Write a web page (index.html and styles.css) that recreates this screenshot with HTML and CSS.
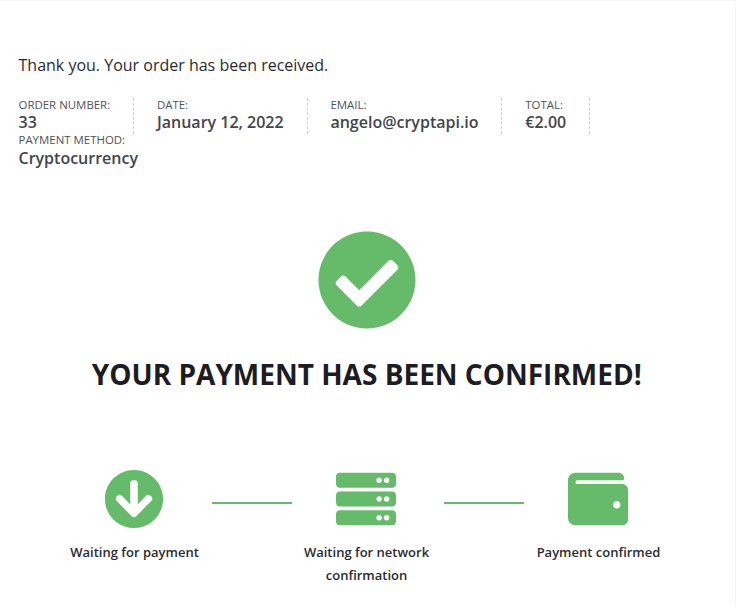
FILE: index.html
```html
<!DOCTYPE html>
<html lang="en">
<head>
<meta charset="utf-8">
<title>Order received</title>
<link rel="stylesheet" href="styles.css">
</head>
<body>
<main class="page">
  <p class="notice">Thank you. Your order has been received.</p>
  <ul class="overview">
    <li>Order number:<strong>33</strong></li>
    <li>Date:<strong>January 12, 2022</strong></li>
    <li>Email:<strong>angelo@cryptapi.io</strong></li>
    <li>Total:<strong>€2.00</strong></li>
    <li class="last">Payment method:<strong>Cryptocurrency</strong></li>
  </ul>
  <svg class="check" viewBox="5.440 5.440 501.100 501.100"><path d="M504 256c0 136.967-111.033 248-248 248S8 392.967 8 256 119.033 8 256 8s248 111.033 248 248zM227.314 387.314l184-184c6.248-6.248 6.248-16.379 0-22.627l-22.627-22.627c-6.248-6.249-16.379-6.249-22.628 0L216 308.118l-70.059-70.059c-6.248-6.248-16.379-6.248-22.628 0l-22.627 22.627c-6.248 6.248-6.248 16.379 0 22.627l104 104c6.249 6.249 16.379 6.249 22.628.001z"/></svg>
  <h1>Your payment has been confirmed!</h1>
  <div class="steps">
    <div class="step">
      <svg class="icon" viewBox="0 0 512 512"><path d="M504 256c0 137-111 248-248 248S8 393 8 256 119 8 256 8s248 111 248 248zm-143.600-28.900L288 302.600V120c0-13.300-10.700-24-24-24h-16c-13.300 0-24 10.700-24 24v182.600l-72.400-75.500c-9.300-9.700-24.800-9.900-34.300-.4l-10.900 11c-9.400 9.400-9.400 24.600 0 33.900L239 404.300c9.400 9.400 24.600 9.400 33.900 0l132.700-132.700c9.400-9.400 9.400-24.600 0-33.900l-10.900-11c-9.500-9.500-25-9.300-34.300.4z"/></svg>
      <p>Waiting for payment</p>
    </div>
    <div class="line"></div>
    <div class="step">
      <svg class="icon" viewBox="0 0 512 512"><path d="M480 160H32c-17.673 0-32-14.327-32-32V64c0-17.673 14.327-32 32-32h448c17.673 0 32 14.327 32 32v64c0 17.673-14.327 32-32 32zm-48-88c-13.255 0-24 10.745-24 24s10.745 24 24 24 24-10.745 24-24-10.745-24-24-24zm-64 0c-13.255 0-24 10.745-24 24s10.745 24 24 24 24-10.745 24-24-10.745-24-24-24zm112 248H32c-17.673 0-32-14.327-32-32v-64c0-17.673 14.327-32 32-32h448c17.673 0 32 14.327 32 32v64c0 17.673-14.327 32-32 32zm-48-88c-13.255 0-24 10.745-24 24s10.745 24 24 24 24-10.745 24-24-10.745-24-24-24zm-64 0c-13.255 0-24 10.745-24 24s10.745 24 24 24 24-10.745 24-24-10.745-24-24-24zm112 248H32c-17.673 0-32-14.327-32-32v-64c0-17.673 14.327-32 32-32h448c17.673 0 32 14.327 32 32v64c0 17.673-14.327 32-32 32zm-48-88c-13.255 0-24 10.745-24 24s10.745 24 24 24 24-10.745 24-24-10.745-24-24-24zm-64 0c-13.255 0-24 10.745-24 24s10.745 24 24 24 24-10.745 24-24-10.745-24-24-24z"/></svg>
      <p>Waiting for network confirmation</p>
    </div>
    <div class="line"></div>
    <div class="step">
      <svg class="icon" viewBox="0 0 512 512"><path d="M461.200 128H80c-8.840 0-16-7.160-16-16s7.160-16 16-16h384c8.840 0 16-7.160 16-16 0-26.510-21.490-48-48-48H64C28.650 32 0 60.650 0 96v320c0 35.350 28.650 64 64 64h397.200c28.020 0 50.800-21.530 50.800-48V176c0-26.470-22.780-48-50.800-48zM416 336c-17.670 0-32-14.330-32-32s14.330-32 32-32 32 14.330 32 32-14.330 32-32 32z"/></svg>
      <p>Payment confirmed</p>
    </div>
  </div>
</main>
</body>
</html>
```
FILE: styles.css
```css
* { box-sizing: border-box; }
body { margin: 0; background: #fff; font-family: "Open Sans", sans-serif; color: #1f1f1f; }
.page { width: 736px; height: 606px; padding: 51px 18px 0 18.500px; border-top: 1px solid #f8f8f8; border-right: 1px solid #f5f5f5; overflow: hidden; }
.notice { margin: 0; font-size: 16px; line-height: 26px; color: #2b2b2f; }
.overview { list-style: none; margin: 20px 0 0; padding: 0; display: flex; flex-wrap: wrap; }
.overview li { height: 36px; padding-right: 22.880px; margin-right: 22.880px; border-right: 1px dashed #d3ced2; font-size: 11.44px; line-height: 13px; text-transform: uppercase; color: #505258; }
.overview strong { display: block; font-size: 16px; font-weight: 600; line-height: 22px; text-transform: none; color: #43454b; }
.overview .last { border: 0; line-height: 12px; }
.overview .last strong { line-height: 24px; }
.check { display: block; width: 98px; height: 98px; margin: 61px 0 0 299.500px; fill: #66bb6a; }
h1 { margin: 24px 0 0; padding-right: 2px; font-size: 28px; line-height: 42px; font-weight: 700; text-align: center; text-transform: uppercase; color: #1c1c22; }
.steps { display: flex; margin: 74px 0 0 41.500px; }
.step { width: 152px; padding-right: 3px; text-align: center; }
.icon { display: block; width: 60px; height: 60px; margin-left: 44px; fill: #66bb6a; }
.step p { margin: 12px 0 0; font-size: 13px; line-height: 23px; font-weight: 600; color: #2b2b30; }
.line { width: 80px; height: 2px; margin-top: 33px; background: #66bb6a; }
```
